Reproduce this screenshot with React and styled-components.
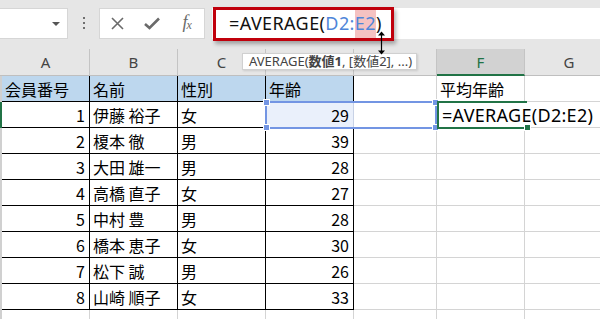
import React from "react";
import styled, { createGlobalStyle } from "styled-components";

const GlobalStyle = createGlobalStyle`
  html, body {
    margin: 0;
    padding: 0;
    background: #fff;
  }
  body {
    font-family: "Noto Sans CJK JP", "Noto Sans", sans-serif;
  }
`;

const Page = styled.div`
  position: relative;
  width: 600px;
  height: 319px;
  overflow: hidden;
  background: #fff;
`;

const Toolbar = styled.div`
  height: 49px;
  box-sizing: border-box;
  padding-top: 8px;
  display: flex;
  align-items: flex-start;
  background: #e6e6e6;
`;

const NameBox = styled.div`
  width: 68px;
  height: 31px;
  box-sizing: border-box;
  background: #fff;
  border: 1px solid #d6d6d6;
  border-left: none;
  display: flex;
  align-items: center;
  justify-content: flex-end;
  padding-right: 7px;
`;

const Caret = styled.span`
  width: 0;
  height: 0;
  border-left: 4px solid transparent;
  border-right: 4px solid transparent;
  border-top: 4px solid #555;
`;

const Grip = styled.div`
  width: 2px;
  margin: 9px 14px 0 15px;
  display: flex;
  flex-direction: column;
  gap: 3px;

  span {
    width: 2px;
    height: 2px;
    background: #6f6f6f;
  }
`;

const ButtonBox = styled.div`
  width: 106px;
  height: 31px;
  box-sizing: border-box;
  background: #fff;
  border: 1px solid #d6d6d6;
  display: flex;
  align-items: center;
`;

const IconSlot = styled.div`
  width: 35px;
  display: flex;
  justify-content: center;
  align-items: center;
  color: #6a6a6a;
`;

const Fx = styled.span`
  font-family: "Liberation Serif", serif;
  font-style: italic;
  font-size: 18px;
  line-height: 18px;
  color: #6a6a6a;
  letter-spacing: -1px;

  sub {
    font-size: 12px;
    vertical-align: -1px;
  }
`;

const FormulaBox = styled.div`
  flex: 1;
  margin-left: 7px;
  height: 31px;
  background: #fff;
  padding-left: 17px;
  font-family: "Noto Sans", sans-serif;
  font-size: 18px;
  letter-spacing: 0.4px;
  line-height: 31px;
  color: #111;
  white-space: nowrap;
`;

const Ref = styled.span`
  color: #4f86d9;
  background: ${(p) => (p.$hl ? "#f5c2c2" : "transparent")};
  padding: 3px 0 4px;
`;

const Cursor = styled.span`
  display: inline-block;
  width: 1px;
  height: 22px;
  background: #777;
  vertical-align: -4px;
  margin: 0 -1px 0 0;
`;

const RedFrame = styled.div`
  position: absolute;
  left: 213px;
  top: 7px;
  width: 181px;
  height: 34px;
  box-sizing: border-box;
  border: 3px solid #c0000c;
  box-shadow: 2px 3px 4px rgba(0, 0, 0, 0.3);
  pointer-events: none;
`;

const Sheet = styled.div`
  display: grid;
  grid-template-columns: 2px 88px 88px 88px 88px 83px 88px 89px;
  grid-template-rows: 27px repeat(10, 26px);
`;

const Corner = styled.div`
  background: #e6e6e6;
  border-bottom: 1px solid #bfbfbf;
`;

const ColHead = styled.div`
  box-sizing: border-box;
  display: flex;
  align-items: center;
  justify-content: center;
  font-family: "Noto Sans", sans-serif;
  font-size: 15px;
  color: ${(p) => (p.$active ? "#217346" : "#444")};
  background: ${(p) => (p.$active ? "#d2d2d2" : "#e6e6e6")};
  border-right: 1px solid #c4c4c4;
  border-bottom: ${(p) => (p.$active ? "2px solid #217346" : "1px solid #bfbfbf")};
`;

const RowStub = styled.div`
  background: ${(p) => (p.$active ? "#217346" : "#d0d0d0")};
`;

const Cell = styled.div`
  box-sizing: border-box;
  display: flex;
  align-items: center;
  justify-content: ${(p) => (p.$right ? "flex-end" : "flex-start")};
  padding: 0 4px 0 3px;
  font-size: 16px;
  color: #000;
  white-space: nowrap;
  overflow: visible;
  position: relative;
  z-index: ${(p) => (p.$over ? 2 : 0)};
  background: ${(p) => p.$fill || "transparent"};
  border-right: 1px solid
    ${(p) => (p.$noRight ? "transparent" : p.$rightColor || (p.$table ? "#000" : "#d4d4d4"))};
  border-bottom: 1px solid ${(p) => (p.$table ? "#000" : "#d4d4d4")};
`;

const FormulaText = styled.span`
  font-family: "Noto Sans", sans-serif;
  font-size: 18px;
  letter-spacing: 0.3px;
  margin-left: 2px;
`;

const Tooltip = styled.div`
  position: absolute;
  left: 242px;
  top: 53px;
  height: 17px;
  padding: 0 4px 0 6px;
  box-sizing: border-box;
  background: #fff;
  border: 1px solid #d0d0d0;
  box-shadow: 1px 1px 2px rgba(0, 0, 0, 0.12);
  font-family: "Noto Sans", "Noto Sans CJK JP", sans-serif;
  font-size: 13px;
  line-height: 15px;
  color: #444;
  white-space: nowrap;
  z-index: 5;

  b {
    font-weight: 700;
  }
`;

const ResizeCursor = styled.svg`
  position: absolute;
  left: 376px;
  top: 30px;
  z-index: 6;
`;

const Selection = styled.div`
  position: absolute;
  left: 265px;
  top: 101px;
  width: 172px;
  height: 28px;
  box-sizing: border-box;
  border: 2px solid #7395e3;
  z-index: 3;
  pointer-events: none;
`;

const Handle = styled.span`
  position: absolute;
  width: 5px;
  height: 5px;
  background: ${(p) => p.$color || "#7395e3"};
  border: 1px solid #fff;
  ${(p) => (p.$top ? "top: -4px;" : "bottom: -4px;")}
  ${(p) => (p.$left ? "left: -4px;" : "right: -4px;")}
`;

const ActiveCell = styled.div`
  position: absolute;
  left: 437px;
  top: 101px;
  width: 90px;
  height: 28px;
  box-sizing: border-box;
  border: 2px solid #217346;
  border-right: none;
  z-index: 3;
  pointer-events: none;
`;

const rows = [
  ["会員番号", "名前", "性別", "年齢"],
  [1, "伊藤 裕子", "女", 29],
  [2, "榎本 徹", "男", 39],
  [3, "大田 雄一", "男", 28],
  [4, "高橋 直子", "女", 27],
  [5, "中村 豊", "男", 28],
  [6, "橋本 恵子", "女", 30],
  [7, "松下 誠", "男", 26],
  [8, "山崎 順子", "女", 33],
];

// D and E letters sit under the argument tooltip, so they are not shown
const cols = ["A", "B", "C", "", "", "F", "G"];

const App = () => {
  const bodyRows = [...rows, null];

  return (
    <Page>
      <GlobalStyle />
      <Toolbar>
        <NameBox>
          <Caret />
        </NameBox>
        <Grip>
          <span />
          <span />
          <span />
        </Grip>
        <ButtonBox>
          <IconSlot>
            <svg width="13" height="13" viewBox="0 0 13 13">
              <path d="M1 1L12 12M12 1L1 12" stroke="#6a6a6a" strokeWidth="1.6" />
            </svg>
          </IconSlot>
          <IconSlot>
            <svg width="16" height="13" viewBox="0 0 16 13">
              <path d="M1 7L5.5 11L15 1.5" stroke="#6a6a6a" strokeWidth="2.6" fill="none" />
            </svg>
          </IconSlot>
          <IconSlot>
            <Fx>
              f<sub>x</sub>
            </Fx>
          </IconSlot>
        </ButtonBox>
        <FormulaBox>
          =AVERAGE(<Ref>D2:</Ref>
          <Cursor />
          <Ref $hl>E2</Ref>)
        </FormulaBox>
      </Toolbar>

      <Sheet>
        <Corner />
        {cols.map((c, k) => (
          <ColHead key={k} $active={c === "F"}>
            {c}
          </ColHead>
        ))}

        {bodyRows.map((r, i) => (
          <React.Fragment key={i}>
            <RowStub $active={i === 1} />
            {[0, 1, 2, 3].map((j) => (
              <Cell
                key={j}
                $table={r !== null}
                $right={i > 0 && (j === 0 || j === 3)}
                $fill={i === 0 && r ? "#bdd7ee" : i === 1 && j === 3 ? "#eaf0fb" : undefined}
                $rightColor={i === 1 && j === 3 ? "#c8d2e6" : undefined}
              >
                {r ? r[j] : ""}
              </Cell>
            ))}
            <Cell />
            <Cell $over={i === 1} $noRight={i === 1}>
              {i === 0 && "平均年齢"}
              {i === 1 && <FormulaText>=AVERAGE(D2:E2)</FormulaText>}
            </Cell>
            <Cell />
          </React.Fragment>
        ))}
      </Sheet>

      <RedFrame />
      <ResizeCursor width="11" height="26" viewBox="0 0 11 26">
        <path d="M5.5 3V23" stroke="#000" strokeWidth="1.2" />
        <path d="M2 5.5L5.5 1.5L9 5.5Z" fill="#000" />
        <path d="M2 20.5L5.5 24.5L9 20.5Z" fill="#000" />
      </ResizeCursor>
      <Tooltip>
        AVERAGE(<b>数値1</b>, [数値2], ...)
      </Tooltip>

      <Selection>
        <Handle $top $left />
        <Handle $top />
        <Handle $left />
        <Handle />
      </Selection>
      <ActiveCell>
        <Handle $color="#217346" />
      </ActiveCell>
    </Page>
  );
};

export default App;
